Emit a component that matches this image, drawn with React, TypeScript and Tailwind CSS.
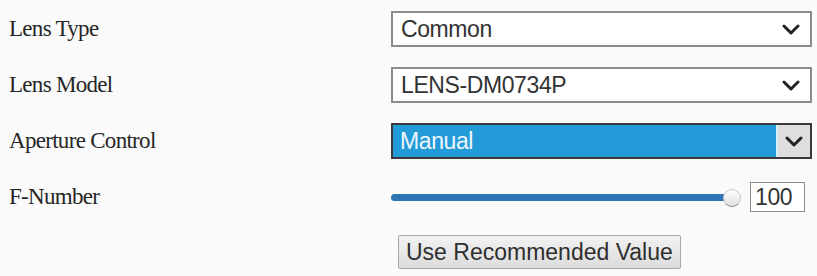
import React from 'react';

const serif = { fontFamily: '"Liberation Serif", "Times New Roman", serif' };
const sans = { fontFamily: '"Liberation Sans", Arial, sans-serif' };

function Chevron() {
  return (
    <svg width="18" height="11" viewBox="0 0 18 11" fill="none" stroke="#222" strokeWidth="3" strokeLinecap="round" strokeLinejoin="round">
      <path d="M2 2l7 7 7-7" />
    </svg>
  );
}

function Label({ children }: { children: React.ReactNode }) {
  return (
    <div className="w-[382px] text-[23px] tracking-[-0.7px] text-[#262626]" style={serif}>
      {children}
    </div>
  );
}

function Select({ value }: { value: string }) {
  return (
    <div className="flex h-[36px] w-[421px] items-center justify-between border-2 border-[#8c8c8c] bg-white pl-[8px] pr-[10px]">
      <span className="text-[23px] tracking-[-0.4px] text-[#333]" style={sans}>{value}</span>
      <Chevron />
    </div>
  );
}

export default function App() {
  return (
    <div className="h-[276px] w-[817px] bg-[#fafafa] pl-[9px] pt-[11px]">
      <div className="flex flex-col gap-[20px]">
        <div className="flex h-[36px] items-center">
          <Label>Lens Type</Label>
          <Select value="Common" />
        </div>
        <div className="flex h-[36px] items-center">
          <Label>Lens Model</Label>
          <Select value="LENS-DM0734P" />
        </div>
        <div className="flex h-[36px] items-center">
          <Label>Aperture Control</Label>
          <div className="flex h-[36px] w-[421px] border-2 border-[#3a3a3a]">
            <div className="flex flex-1 items-center bg-[#229bd8] pl-[7px]">
              <span className="text-[23px] tracking-[-0.4px] text-[#eef6fc]" style={sans}>Manual</span>
            </div>
            <div className="w-[2px] bg-[#d8eef8]" />
            <div className="flex w-[32px] items-center justify-center bg-[#dedede]">
              <Chevron />
            </div>
          </div>
        </div>
        <div className="flex h-[36px] items-center">
          <Label>F-Number</Label>
          <div className="flex items-center">
            <div className="relative flex h-[20px] w-[350px] items-center">
              <div className="h-[7px] w-[338px] rounded-full bg-[#2c74b2]" />
              <div className="absolute left-[332px] top-[2px] h-[18px] w-[18px] rounded-full border border-[#c4c4c4] border-b-[#8a8a8a] bg-gradient-to-b from-white to-[#e0e0e0]" />
            </div>
            <div className="ml-[9px] flex h-[30px] w-[55px] items-center border border-[#8c8c8c] bg-white pl-[4px]">
              <span className="text-[23px] tracking-[-0.4px] text-[#333]" style={sans}>100</span>
            </div>
          </div>
        </div>
        <div className="flex h-[34px] items-center">
          <div className="w-[389px]" />
          <button
            className="h-[34px] rounded-[2px] border border-[#a8a8a8] bg-gradient-to-b from-[#f2f2f2] to-[#dcdcdc] px-[7px] text-[23px] leading-none text-[#2e2e2e]"
            style={sans}
          >
            Use Recommended Value
          </button>
        </div>
      </div>
    </div>
  );
}
